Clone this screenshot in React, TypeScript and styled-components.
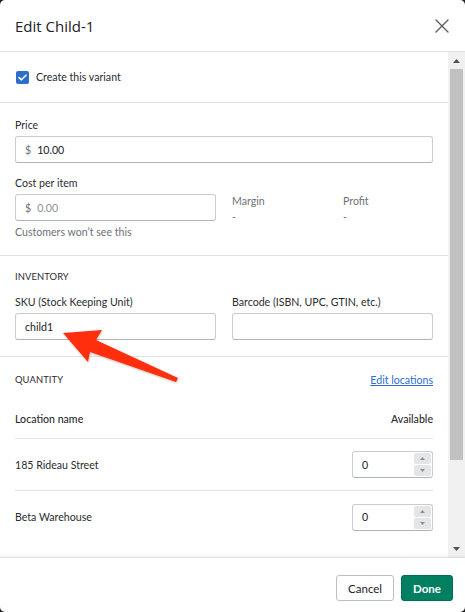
import styled, { createGlobalStyle } from 'styled-components';

const GlobalStyle = createGlobalStyle`
  html, body {
    margin: 0;
    padding: 0;
    background: #1f1f1f;
  }
  * {
    box-sizing: border-box;
  }
`;

const Dialog = styled.div`
  position: relative;
  width: 465px;
  height: 612px;
  display: flex;
  flex-direction: column;
  background: #ffffff;
  border-radius: 5px;
  overflow: hidden;
  font-family: Lato, 'Open Sans', sans-serif;
  font-size: 10.6px;
  color: #2a2c2e;
`;

const Header = styled.div`
  height: 52px;
  flex: none;
  display: flex;
  align-items: center;
  justify-content: space-between;
  padding: 0 15px 0 15px;
  border-bottom: 1px solid #dfe1e3;
`;

const Title = styled.h2`
  margin: 0;
  font-family: 'Open Sans', sans-serif;
  font-size: 15px;
  font-weight: 400;
  color: #202223;
`;

const CloseButton = styled.button`
  border: none;
  background: none;
  padding: 0;
  width: 16px;
  height: 16px;
  display: flex;
  align-items: center;
  justify-content: center;
  color: #5c5f62;
`;

const Body = styled.div`
  flex: 1;
  min-height: 0;
  display: flex;
`;

const Content = styled.div`
  flex: 1;
  min-width: 0;
  overflow: hidden;
`;

const Scrollbar = styled.div`
  width: 17px;
  flex: none;
  display: flex;
  flex-direction: column;
  background: #f1f1f1;
`;

const ScrollArrow = styled.div`
  height: 17px;
  flex: none;
  display: flex;
  align-items: center;
  justify-content: center;
`;

const Track = styled.div`
  flex: 1;
  padding: 0 2px;
`;

const Thumb = styled.div`
  height: 391px;
  background: #c1c1c1;
`;

const Section = styled.div<{ $pad?: string; $open?: boolean }>`
  padding: ${(p) => p.$pad ?? '16px 15px 16px'};
  border-bottom: ${(p) => (p.$open ? 'none' : '1px solid #dfe1e3')};
`;

const CheckRow = styled.label`
  display: flex;
  align-items: center;
  gap: 7px;
  height: 50px;
  padding-left: 16px;
`;

const CheckBox = styled.span`
  width: 13px;
  height: 13px;
  border-radius: 2px;
  background: #2c6ecb;
  display: flex;
  align-items: center;
  justify-content: center;
`;

const Label = styled.div`
  line-height: 16px;
  margin-bottom: 3px;
`;

const Caps = styled.div`
  font-size: 9.4px;
  text-transform: uppercase;
  line-height: 14px;
  letter-spacing: 0.1px;
`;

const Input = styled.div`
  height: 27px;
  width: 100%;
  border: 1px solid #c9cccf;
  border-bottom-color: #aeb4b9;
  border-radius: 3px;
  display: flex;
  align-items: center;
  padding: 0 9px;
  gap: 6px;
  color: #202223;
`;

const Prefix = styled.span`
  color: #6d7175;
`;

const Value = styled.span<{ $muted?: boolean }>`
  color: ${(p) => (p.$muted ? '#8c9196' : '#202223')};
`;

const Row = styled.div<{ $top?: number }>`
  display: flex;
  gap: 16px;
  margin-top: ${(p) => p.$top ?? 0}px;
`;

const Field = styled.div<{ $width?: number }>`
  width: ${(p) => (p.$width ? `${p.$width}px` : 'auto')};
  flex: ${(p) => (p.$width ? 'none' : '1')};
`;

const Stat = styled.div`
  width: 95px;
  flex: none;
  padding-top: 18px;
  color: #6d7175;
  line-height: 16px;
`;

const Help = styled.div`
  color: #6d7175;
  line-height: 16px;
  margin-top: 3px;
`;

const SpaceRow = styled.div`
  display: flex;
  align-items: center;
  justify-content: space-between;
  height: 14px;
`;

const LinkText = styled.a`
  color: #2c6ecb;
  text-decoration: underline;
`;

const TableHead = styled.div`
  display: flex;
  align-items: center;
  justify-content: space-between;
  height: 52px;
  padding-top: 12px;
  border-bottom: 1px solid #e1e3e5;
  font-weight: 500;
`;

const TableRow = styled.div<{ $last?: boolean }>`
  display: flex;
  align-items: center;
  justify-content: space-between;
  height: 52px;
  border-bottom: ${(p) => (p.$last ? 'none' : '1px solid #e1e3e5')};
`;

const NumberBox = styled.div`
  width: 81px;
  height: 27px;
  border: 1px solid #c9cccf;
  border-bottom-color: #aeb4b9;
  border-radius: 3px;
  display: flex;
  align-items: center;
  justify-content: space-between;
  padding: 0 1px 0 9px;
`;

const Spinner = styled.div`
  display: flex;
  flex-direction: column;
  gap: 1px;
`;

const SpinButton = styled.div`
  width: 17px;
  height: 11px;
  background: #e4e5e7;
  border-radius: 2px;
  display: flex;
  align-items: center;
  justify-content: center;
`;

const Footer = styled.div`
  height: 55px;
  flex: none;
  display: flex;
  justify-content: flex-end;
  align-items: flex-start;
  gap: 7px;
  padding: 17px 12px 0 0;
  border-top: 1px solid #dfe1e3;
  box-shadow: 0 -1px 2px rgba(0, 0, 0, 0.06);
`;

const Button = styled.button<{ $primary?: boolean }>`
  height: 26px;
  padding: 0 11px;
  border-radius: 3px;
  font-family: inherit;
  font-size: 11.5px;
  font-weight: ${(p) => (p.$primary ? 700 : 400)};
  color: ${(p) => (p.$primary ? '#ffffff' : '#202223')};
  background: ${(p) => (p.$primary ? '#008060' : '#ffffff')};
  border: 1px solid ${(p) => (p.$primary ? '#006e52' : '#babfc3')};
`;

const Annotation = styled.svg`
  position: absolute;
  left: 0;
  top: 0;
  pointer-events: none;
`;

const Tri = ({ up }: { up?: boolean }) => (
  <svg width="7" height="4" viewBox="0 0 7 4">
    <path d={up ? 'M0 4 L3.5 0 L7 4 Z' : 'M0 0 L3.5 4 L7 0 Z'} fill="#505050" />
  </svg>
);

const SmallTri = ({ up }: { up?: boolean }) => (
  <svg width="5" height="3" viewBox="0 0 5 3">
    <path d={up ? 'M0 3 L2.5 0 L5 3 Z' : 'M0 0 L2.5 3 L5 0 Z'} fill="#8c9196" />
  </svg>
);

const locations = ['185 Rideau Street', 'Beta Warehouse'];

export default function App() {
  return (
    <>
      <GlobalStyle />
      <Dialog>
        <Header>
          <Title>Edit Child-1</Title>
          <CloseButton aria-label="Close">
            <svg width="14" height="14" viewBox="0 0 14 14">
              <path d="M1 1 L13 13 M13 1 L1 13" stroke="#5c5f62" strokeWidth="1.4" strokeLinecap="round" />
            </svg>
          </CloseButton>
        </Header>
        <Body>
          <Content>
            <Section $pad="0">
              <CheckRow>
                <CheckBox>
                  <svg width="9" height="7" viewBox="0 0 9 7">
                    <path d="M1 3.6 L3.4 5.8 L8 1.2" stroke="#fff" strokeWidth="1.6" fill="none" strokeLinecap="round" strokeLinejoin="round" />
                  </svg>
                </CheckBox>
                Create this variant
              </CheckRow>
            </Section>

            <Section $pad="14px 15px 15px">
              <Label>Price</Label>
              <Input>
                <Prefix>$</Prefix>
                <Value>10.00</Value>
              </Input>
              <Row $top={12}>
                <Field $width={201}>
                  <Label>Cost per item</Label>
                  <Input>
                    <Prefix>$</Prefix>
                    <Value $muted>0.00</Value>
                  </Input>
                  <Help>Customers won’t see this</Help>
                </Field>
                <Stat>
                  Margin
                  <br />-
                </Stat>
                <Stat>
                  Profit
                  <br />-
                </Stat>
              </Row>
            </Section>

            <Section $pad="14px 15px 16px">
              <Caps>Inventory</Caps>
              <Row $top={10}>
                <Field>
                  <Label>SKU (Stock Keeping Unit)</Label>
                  <Input>
                    <Value>child1</Value>
                  </Input>
                </Field>
                <Field>
                  <Label>Barcode (ISBN, UPC, GTIN, etc.)</Label>
                  <Input />
                </Field>
              </Row>
            </Section>

            <Section $pad="16px 15px 0" $open>
              <SpaceRow>
                <Caps>Quantity</Caps>
                <LinkText href="#">Edit locations</LinkText>
              </SpaceRow>
              <TableHead>
                <span>Location name</span>
                <span>Available</span>
              </TableHead>
              {locations.map((name, i) => (
                <TableRow key={name} $last={i === locations.length - 1}>
                  <span>{name}</span>
                  <NumberBox>
                    <Value>0</Value>
                    <Spinner>
                      <SpinButton>
                        <SmallTri up />
                      </SpinButton>
                      <SpinButton>
                        <SmallTri />
                      </SpinButton>
                    </Spinner>
                  </NumberBox>
                </TableRow>
              ))}
            </Section>
          </Content>
          <Scrollbar>
            <ScrollArrow>
              <Tri up />
            </ScrollArrow>
            <Track>
              <Thumb />
            </Track>
            <ScrollArrow>
              <Tri />
            </ScrollArrow>
          </Scrollbar>
        </Body>
        <Footer>
          <Button>Cancel</Button>
          <Button $primary>Done</Button>
        </Footer>

        <Annotation width="465" height="612" viewBox="0 0 465 612">
          <defs>
            <filter id="arrowShadow" x="-10%" y="-10%" width="130%" height="130%">
              <feDropShadow dx="0.5" dy="1" stdDeviation="1" floodColor="#000" floodOpacity="0.25" />
            </filter>
          </defs>
          <polygon
            points="63,333 102,330 96,340 178,378 176,382 90,352 88,362"
            fill="#ff2d0f"
            filter="url(#arrowShadow)"
          />
        </Annotation>
      </Dialog>
    </>
  );
}
